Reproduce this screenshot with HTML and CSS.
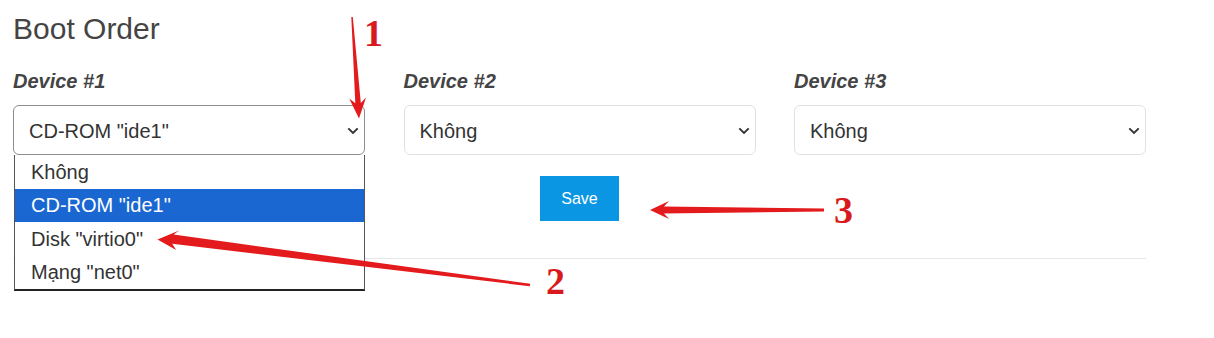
FILE: index.html
```html
<!DOCTYPE html>
<html lang="vi">
<head>
<meta charset="utf-8">
<title>Boot Order</title>
<link rel="stylesheet" href="styles.css">
</head>
<body>
<div class="page">
  <h2 class="title">Boot Order</h2>
  <div class="devices">
    <div class="field">
      <div class="label">Device #1</div>
      <div class="select-wrap">
        <div class="select is-open">
          <span>CD-ROM "ide1"</span>
          <svg class="chev" width="12" height="8" viewBox="0 0 12 8"><path d="M1.3 1.3 6 6 10.7 1.3" fill="none" stroke="#333" stroke-width="1.9"/></svg>
        </div>
        <ul class="dropdown">
          <li class="opt">Không</li>
          <li class="opt is-selected">CD-ROM "ide1"</li>
          <li class="opt">Disk "virtio0"</li>
          <li class="opt">Mạng "net0"</li>
        </ul>
      </div>
    </div>
    <div class="field">
      <div class="label">Device #2</div>
      <div class="select-wrap">
        <div class="select">
          <span>Không</span>
          <svg class="chev" width="12" height="8" viewBox="0 0 12 8"><path d="M1.3 1.3 6 6 10.7 1.3" fill="none" stroke="#333" stroke-width="1.9"/></svg>
        </div>
      </div>
    </div>
    <div class="field">
      <div class="label">Device #3</div>
      <div class="select-wrap">
        <div class="select">
          <span>Không</span>
          <svg class="chev" width="12" height="8" viewBox="0 0 12 8"><path d="M1.3 1.3 6 6 10.7 1.3" fill="none" stroke="#333" stroke-width="1.9"/></svg>
        </div>
      </div>
    </div>
  </div>
  <div class="actions">
    <button class="btn-save" type="button">Save</button>
  </div>
  <hr class="divider">
</div>

<svg class="annotations" width="1214" height="338" viewBox="0 0 1214 338">
  <g fill="#e31b1d">
    <polygon points="352.8,17 360.8,102.9 366,97.5 359,118.5 349.2,98.6 355.3,103.2 351.3,17"/>
    <polygon points="530.3,283.8 173.6,234.6 179.2,230.4 157.5,239.5 176.2,250 172.2,243.8 529.7,286.2"/>
    <polygon points="824,208.4 664,206.5 669,201 650,210 669,219 664,213.5 824,211.6"/>
  </g>
  <g class="nums">
    <text x="364" y="46">1</text>
    <text x="546" y="294">2</text>
    <text x="834" y="223">3</text>
  </g>
</svg>
</body>
</html>
```

FILE: styles.css
```css
* {
  box-sizing: border-box;
}

body {
  margin: 0;
  position: relative;
  min-height: 338px;
  background: #fff;
  font-family: "Liberation Sans", Arial, sans-serif;
  color: #333;
  overflow: hidden;
}

.page {
  padding: 12px 0 0 13px;
  width: 1146px;
}

.title {
  margin: 0;
  font-size: 30px;
  font-weight: 400;
  line-height: 34px;
  color: #444;
}

.devices {
  display: grid;
  grid-template-columns: repeat(3, 352px);
  column-gap: 38.5px;
  margin-top: 23px;
}

.label {
  font-size: 20px;
  font-weight: 700;
  font-style: italic;
  line-height: 24px;
  color: #444;
}

.select-wrap {
  position: relative;
  margin-top: 12px;
}

.select {
  height: 50px;
  display: flex;
  align-items: center;
  justify-content: space-between;
  padding: 1px 5px 0 15px;
  border: 1px solid #dee2e6;
  border-radius: 6px;
  font-size: 20px;
  line-height: 24px;
  color: #333;
  background: #fff;
}

.select.is-open {
  border-color: #8a8d91;
}

.chev {
  display: block;
  flex: none;
}

.dropdown {
  position: absolute;
  top: 100%;
  left: 1px;
  right: 0;
  margin: 0;
  padding: 0;
  list-style: none;
  background: #fff;
  border-left: 1px solid #555;
  border-right: 1px solid #555;
  border-bottom: 2px solid #222;
  z-index: 2;
}

.opt {
  height: 33.5px;
  display: flex;
  align-items: center;
  padding: 1px 0 0 16px;
  font-size: 20px;
  color: #333;
}

.opt.is-selected {
  background: #1a67d2;
  color: #fff;
}

.actions {
  display: flex;
  justify-content: center;
  margin-top: 21px;
}

.btn-save {
  width: 79px;
  height: 45px;
  padding: 0;
  border: 0;
  border-radius: 0;
  background: #0b96e3;
  color: #fff;
  font-family: "Liberation Sans", Arial, sans-serif;
  font-size: 16px;
}

.divider {
  margin: 37px 0 0;
  border: 0;
  border-top: 1px solid #e6e6e6;
}

.annotations {
  position: absolute;
  top: 0;
  left: 0;
  pointer-events: none;
  z-index: 5;
}

.nums text {
  font-family: "Liberation Serif", "Times New Roman", serif;
  font-weight: 700;
  font-size: 38px;
  fill: #d81a1e;
}
```
